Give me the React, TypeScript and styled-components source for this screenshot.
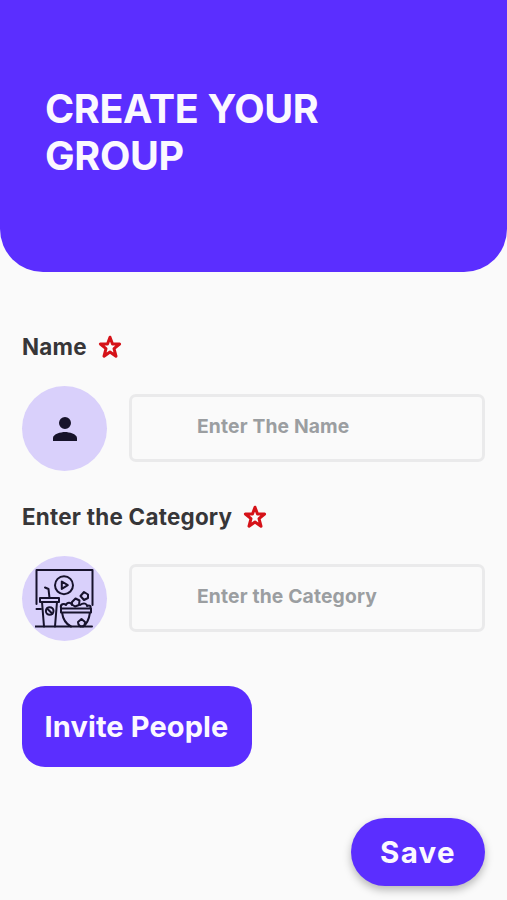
import React from "react";
import styled, { createGlobalStyle } from "styled-components";

const GlobalStyle = createGlobalStyle`
  * { box-sizing: border-box; }
  html, body { margin: 0; background: #fafafa; }
  body { font-family: Inter, sans-serif; }
`;

const Screen = styled.main`
  width: 507px;
  height: 900px;
  overflow: hidden;
  background: #fafafa;
`;

const Header = styled.header`
  height: 272px;
  padding: 86px 45px 0;
  background: #5b2eff;
  border-radius: 0 0 43px 43px;
`;

const Title = styled.h1`
  margin: 0;
  max-width: 320px;
  color: #fbf8ff;
  font-size: 39.5px;
  font-weight: 700;
  line-height: 47px;
  letter-spacing: -0.35px;
`;

const Form = styled.form`
  display: flex;
  flex-direction: column;
  padding: 59px 22px 0;
`;

const Field = styled.section`
  height: 170px;
`;

const Label = styled.label`
  display: flex;
  align-items: center;
  gap: 11px;
  height: 31px;
  margin-bottom: 24px;
  color: #373638;
  font-size: 22.4px;
  font-weight: 700;
  letter-spacing: 0.25px;
  white-space: nowrap;
`;

const Row = styled.div`
  display: flex;
  align-items: center;
  gap: 22px;
`;

const Avatar = styled.div`
  display: flex;
  align-items: center;
  justify-content: center;
  flex: none;
  width: 85px;
  height: 85px;
  border-radius: 50%;
  background: #d9d0fb;
`;

const Input = styled.input`
  flex: 1;
  min-width: 0;
  height: 68px;
  margin: 0 0 2px;
  padding: 0 20px 3px 65px;
  border: 3px solid #eaeaeb;
  border-radius: 7px;
  outline: none;
  background: #fafafa;
  color: #373638;
  font: 700 19.3px Inter, sans-serif;
  letter-spacing: 0.15px;
  &::placeholder { color: #9b9ea1; opacity: 1; }
`;

const Button = styled.button`
  border: 0;
  padding: 0;
  background: #5b2eff;
  color: #fbf8ff;
  font-family: Inter, sans-serif;
  white-space: nowrap;
`;

const InviteButton = styled(Button)`
  width: 230px;
  height: 81px;
  padding-right: 1px;
  margin-top: 15px;
  border-radius: 23px;
  font-size: 29px;
  font-weight: 700;
  letter-spacing: 0.12px;
`;

const SaveButton = styled(Button)`
  align-self: flex-end;
  width: 134px;
  height: 68px;
  margin-top: 51px;
  border-radius: 34px;
  font-size: 29.5px;
  font-weight: 700;
  letter-spacing: 1.3px;
  box-shadow: 0 4px 8px rgba(0, 0, 0, 0.27);
`;

const StarIcon = () => (
  <svg width="24" height="24" viewBox="0 0 24 24" fill="none" stroke="#d51218" strokeWidth="3" strokeLinejoin="round">
    <path d="M12 2.2 14.5 9H21.6L16 13.6 18 21.2 12 17 6 21.2 8 13.6 2.4 9H9.5Z" />
  </svg>
);

const PersonIcon = () => (
  <svg width="36" height="36" viewBox="0 0 24 24" fill="#17132a">
    <path d="M12 12a4 4 0 1 0 0-8 4 4 0 0 0 0 8Zm0 2c-2.67 0-8 1.34-8 4v2h16v-2c0-2.66-5.33-4-8-4Z" />
  </svg>
);

const MovieIcon = () => (
  <svg width="60" height="60" viewBox="1 1 60 60" fill="none" stroke="#17122c" strokeWidth="2" strokeLinecap="round" strokeLinejoin="round">
    <path d="M2.5 36V2H58.5V37M2.5 41H7M1.5 58.5H58" />
    <circle cx="30" cy="17.2" r="9" />
    <path d="M27.8 13.5v7.4l6-3.7Z" />
    <path d="M11 19.5l3.5 1.5 1 9M6 30h19v4H6ZM8 34l2 24.5M23 34l-2 24.5" />
    <circle cx="15.7" cy="43" r="3.8" />
    <path d="m13 40.5 5.4 5.2M27 40.5h30v4H27ZM28 44.5c1 7 5 12 9 14M56 44.5c-1 7-4 12-7 14" />
    <path d="M27 40c-1-4 3-5 5-3 1-3 5-3 6 0M46 37c4-3 7-1 7 1 3-1 4 0 3.5 2" />
    <path d="m38 34 3.5-3.5 4 2-.5 4.5-4 1.5-3-2ZM46.5 28l3.5-4 4 2.5v3.5l-4 2ZM44 54l3.5-3 3.5 3-.5 4-4 .5-2-2Z" />
  </svg>
);

export default function App() {
  return (
    <Screen>
      <GlobalStyle />
      <Header>
        <Title>CREATE YOUR GROUP</Title>
      </Header>
      <Form onSubmit={(event) => event.preventDefault()}>
        <Field>
          <Label htmlFor="name">Name <StarIcon /></Label>
          <Row>
            <Avatar><PersonIcon /></Avatar>
            <Input id="name" placeholder="Enter The Name" />
          </Row>
        </Field>
        <Field>
          <Label htmlFor="category">Enter the Category <StarIcon /></Label>
          <Row>
            <Avatar><MovieIcon /></Avatar>
            <Input id="category" placeholder="Enter the Category" />
          </Row>
        </Field>
        <InviteButton type="button">Invite People</InviteButton>
        <SaveButton type="submit">Save</SaveButton>
      </Form>
    </Screen>
  );
}
